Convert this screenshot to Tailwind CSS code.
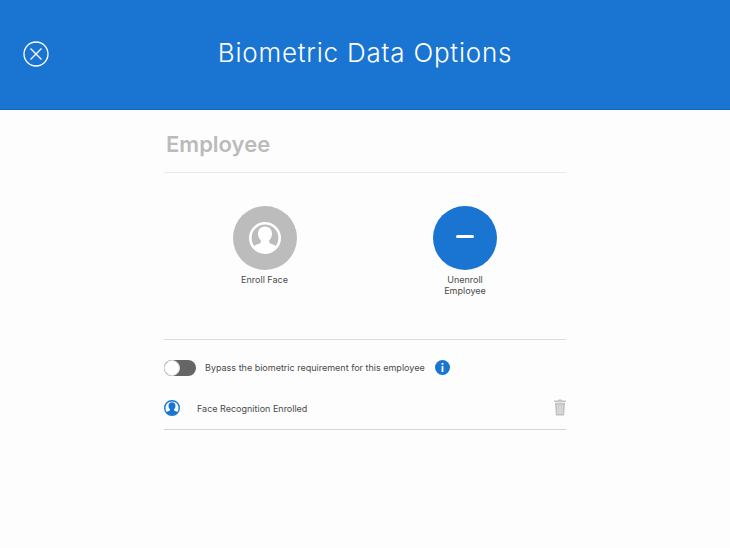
<!DOCTYPE html>
<html>
<head>
<meta charset="utf-8">
<title>Biometric Data Options</title>
<script src="https://cdn.jsdelivr.net/npm/@tailwindcss/browser@4"></script>
</head>
<body class="bg-[#fdfdfd] font-['Inter',sans-serif]">
<div class="w-[730px] h-[548px] overflow-hidden">
    <!-- Header -->
    <header class="relative h-[110px] bg-[#1a75d2] border-b border-[#1068c8] flex items-center justify-center pb-[3px]">
        <button class="absolute left-[23px] top-[41px] w-[26px] h-[26px]">
            <svg class="w-[26px] h-[26px]" viewBox="0 0 26 26" fill="none" stroke="#fff" stroke-width="1.3">
                <circle cx="13" cy="13" r="12"/>
                <path d="M7.5 7.5l11 11M18.5 7.5l-11 11"/>
            </svg>
        </button>
        <h1 class="text-[26px] leading-[32px] font-light tracking-[0.78px] text-white">Biometric Data Options</h1>
    </header>

    <main class="w-[402px] ml-[164px]">
        <!-- Employee -->
        <div class="h-[63px] border-b border-[#e8e8e8] pt-[19px] pl-[2px]">
            <h2 class="text-[22px] leading-[30px] font-semibold text-[#bbbbbb]">Employee</h2>
        </div>

        <!-- Actions -->
        <div class="h-[167px] border-b border-[#dcdcdc] grid grid-cols-[201px_199px] pt-[33px]">
            <div class="flex flex-col items-center">
                <div class="w-[64px] h-[64px] rounded-full bg-[#bcbcbc] flex items-center justify-center">
                    <svg class="w-[32px] h-[32px]" viewBox="0 0 32 32">
                        <circle cx="16" cy="16" r="14.7" fill="#bcbcbc" stroke="#fff" stroke-width="2.6"/>
                        <path fill="#fff" d="M16 4.500c-4.200 0-7 2.900-7 7 0 2.800 1 5.200 2.800 6.800v2c0 1-2.800 1.800-5 2.700-1.100.5-1.900 1.100-2.300 1.900A14 14 0 0 0 16 30a14 14 0 0 0 11.500-5.100c-.4-.8-1.200-1.400-2.300-1.900-2.200-.9-5-1.700-5-2.700v-2c1.800-1.600 2.800-4 2.800-6.800 0-4.100-2.800-7-7-7z"/>
                    </svg>
                </div>
                <span class="mt-[4px] text-[9px] leading-[11px] text-[#4a4a4a] text-center">Enroll Face</span>
            </div>
            <div class="flex flex-col items-center">
                <div class="w-[64px] h-[64px] rounded-full bg-[#1a75d2] flex items-center justify-center">
                    <div class="w-[18px] h-[3px] mb-[4px] rounded-full bg-white"></div>
                </div>
                <span class="mt-[4px] ml-[1px] text-[9px] leading-[11px] text-[#4a4a4a] text-center">Unenroll<br>Employee</span>
            </div>
        </div>

        <!-- Bypass -->
        <div class="flex items-center h-[55px]">
            <div class="w-[32px] h-[16px] rounded-full bg-[#666666] relative">
                <div class="absolute left-0 top-0 w-[16px] h-[16px] rounded-full bg-white border border-[#dddddd]"></div>
            </div>
            <span class="ml-[9px] text-[9px] text-[#4a4a4a]">Bypass the biometric requirement for this employee</span>
            <div class="ml-[10px] w-[15px] h-[15px] rounded-full bg-[#1a75d2] flex items-center justify-center">
                <svg class="w-[3px] h-[9px]" viewBox="0 0 3 9" fill="#fff">
                    <rect x="0.6" y="0" width="1.8" height="1.8"/>
                    <rect x="0.6" y="3" width="1.8" height="6"/>
                </svg>
            </div>
        </div>

        <!-- Enrolled row -->
        <div class="flex items-center h-[35px] border-b border-[#d4d4d4] pb-[9px]">
            <svg class="w-[16px] h-[16px] shrink-0" viewBox="0 0 32 32">
                <circle cx="16" cy="16" r="14.6" fill="#fff" stroke="#1a75d2" stroke-width="2.8"/>
                <path fill="#1a75d2" d="M16 4.500c-4.200 0-7 2.900-7 7 0 2.800 1 5.200 2.800 6.800v2c0 1-2.800 1.800-5 2.700-1.100.5-1.900 1.100-2.300 1.900A14 14 0 0 0 16 30a14 14 0 0 0 11.500-5.100c-.4-.8-1.200-1.400-2.300-1.900-2.200-.9-5-1.700-5-2.700v-2c1.800-1.600 2.800-4 2.800-6.800 0-4.100-2.800-7-7-7z"/>
            </svg>
            <span class="ml-[17px] mt-[2px] text-[9px] text-[#4a4a4a]">Face Recognition Enrolled</span>
            <svg class="ml-auto w-[12px] h-[17px]" viewBox="0 0 12 17" fill="none">
                <path fill="#c2c2c2" d="M4.500.5h3l.5 1h3.500c.3 0 .5.2.5.5v1H0V2c0-.3.2-.5.5-.5H4z"/>
                <path fill="#c2c2c2" d="M1 3.800h10l-.8 12.200c0 .3-.3.5-.6.5H2.400c-.3 0-.6-.2-.6-.5z"/>
                <path stroke="#f2f2f2" stroke-width=".8" d="M3.800 5.500l.3 9.500M6 5.500V15M8.200 5.500L7.900 15"/>
            </svg>
        </div>
    </main>
</div>
</body>
</html>
